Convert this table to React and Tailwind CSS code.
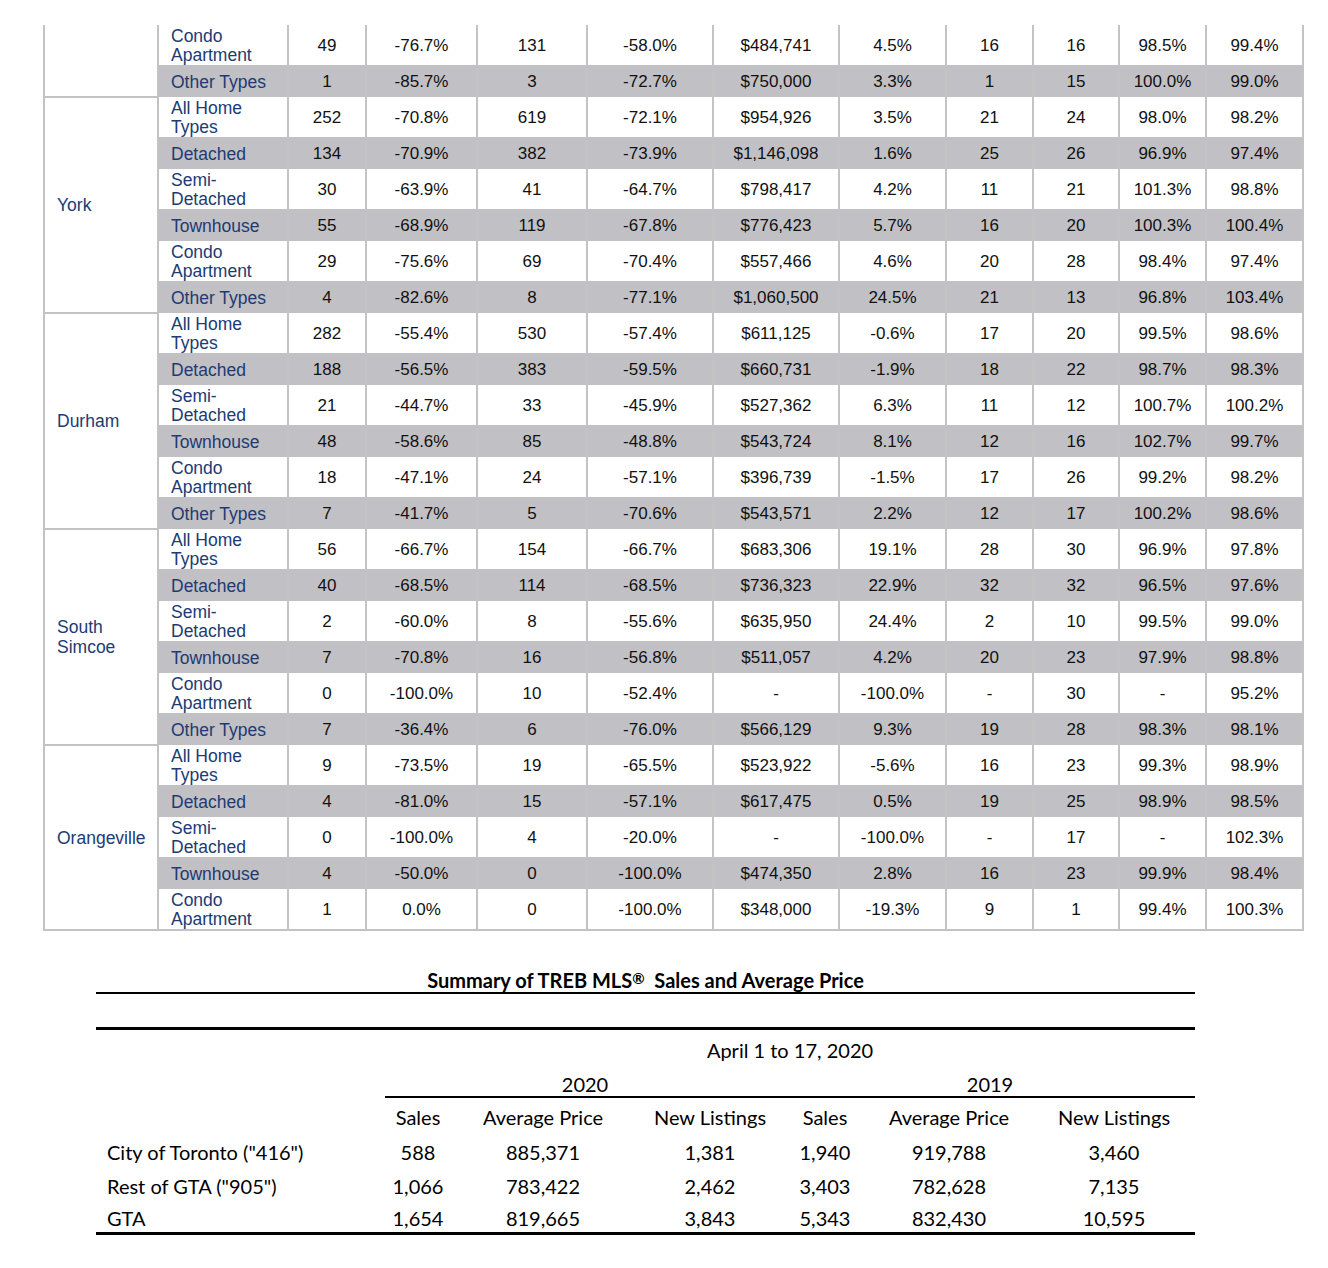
const COL_W = ['w-[114px]', 'w-[130px]', 'w-[78px]', 'w-[111px]', 'w-[110px]', 'w-[126px]', 'w-[126px]', 'w-[107px]', 'w-[87px]', 'w-[86px]', 'w-[87px]', 'w-[97px]']

const TYPES = {
  all: { label: ['All Home', 'Types'], gray: false },
  det: { label: ['Detached'], gray: true },
  semi: { label: ['Semi-', 'Detached'], gray: false },
  town: { label: ['Townhouse'], gray: true },
  condo: { label: ['Condo', 'Apartment'], gray: false },
  other: { label: ['Other Types'], gray: true },
}

const REGIONS = [
  {
    name: [],
    rows: [
      ['condo', '49', '-76.7%', '131', '-58.0%', '$484,741', '4.5%', '16', '16', '98.5%', '99.4%'],
      ['other', '1', '-85.7%', '3', '-72.7%', '$750,000', '3.3%', '1', '15', '100.0%', '99.0%'],
    ],
  },
  {
    name: ['York'],
    rows: [
      ['all', '252', '-70.8%', '619', '-72.1%', '$954,926', '3.5%', '21', '24', '98.0%', '98.2%'],
      ['det', '134', '-70.9%', '382', '-73.9%', '$1,146,098', '1.6%', '25', '26', '96.9%', '97.4%'],
      ['semi', '30', '-63.9%', '41', '-64.7%', '$798,417', '4.2%', '11', '21', '101.3%', '98.8%'],
      ['town', '55', '-68.9%', '119', '-67.8%', '$776,423', '5.7%', '16', '20', '100.3%', '100.4%'],
      ['condo', '29', '-75.6%', '69', '-70.4%', '$557,466', '4.6%', '20', '28', '98.4%', '97.4%'],
      ['other', '4', '-82.6%', '8', '-77.1%', '$1,060,500', '24.5%', '21', '13', '96.8%', '103.4%'],
    ],
  },
  {
    name: ['Durham'],
    rows: [
      ['all', '282', '-55.4%', '530', '-57.4%', '$611,125', '-0.6%', '17', '20', '99.5%', '98.6%'],
      ['det', '188', '-56.5%', '383', '-59.5%', '$660,731', '-1.9%', '18', '22', '98.7%', '98.3%'],
      ['semi', '21', '-44.7%', '33', '-45.9%', '$527,362', '6.3%', '11', '12', '100.7%', '100.2%'],
      ['town', '48', '-58.6%', '85', '-48.8%', '$543,724', '8.1%', '12', '16', '102.7%', '99.7%'],
      ['condo', '18', '-47.1%', '24', '-57.1%', '$396,739', '-1.5%', '17', '26', '99.2%', '98.2%'],
      ['other', '7', '-41.7%', '5', '-70.6%', '$543,571', '2.2%', '12', '17', '100.2%', '98.6%'],
    ],
  },
  {
    name: ['South', 'Simcoe'],
    rows: [
      ['all', '56', '-66.7%', '154', '-66.7%', '$683,306', '19.1%', '28', '30', '96.9%', '97.8%'],
      ['det', '40', '-68.5%', '114', '-68.5%', '$736,323', '22.9%', '32', '32', '96.5%', '97.6%'],
      ['semi', '2', '-60.0%', '8', '-55.6%', '$635,950', '24.4%', '2', '10', '99.5%', '99.0%'],
      ['town', '7', '-70.8%', '16', '-56.8%', '$511,057', '4.2%', '20', '23', '97.9%', '98.8%'],
      ['condo', '0', '-100.0%', '10', '-52.4%', '-', '-100.0%', '-', '30', '-', '95.2%'],
      ['other', '7', '-36.4%', '6', '-76.0%', '$566,129', '9.3%', '19', '28', '98.3%', '98.1%'],
    ],
  },
  {
    name: ['Orangeville'],
    rows: [
      ['all', '9', '-73.5%', '19', '-65.5%', '$523,922', '-5.6%', '16', '23', '99.3%', '98.9%'],
      ['det', '4', '-81.0%', '15', '-57.1%', '$617,475', '0.5%', '19', '25', '98.9%', '98.5%'],
      ['semi', '0', '-100.0%', '4', '-20.0%', '-', '-100.0%', '-', '17', '-', '102.3%'],
      ['town', '4', '-50.0%', '0', '-100.0%', '$474,350', '2.8%', '16', '23', '99.9%', '98.4%'],
      ['condo', '1', '0.0%', '0', '-100.0%', '$348,000', '-19.3%', '9', '1', '99.4%', '100.3%'],
    ],
  },
]

const SUMMARY = [
  ['City of Toronto ("416")', '588', '885,371', '1,381', '1,940', '919,788', '3,460'],
  ['Rest of GTA ("905")', '1,066', '783,422', '2,462', '3,403', '782,628', '7,135'],
  ['GTA', '1,654', '819,665', '3,843', '5,343', '832,430', '10,595'],
]

function Lines({ parts }) {
  return parts.map((p, i) => (
    <span key={i}>
      {i > 0 && <br />}
      {p}
    </span>
  ))
}

function MarketTable() {
  return (
    <table className="table-fixed border-collapse w-[1261px] ml-[43px] mt-[25px] font-[family-name:'Liberation_Sans',Arial,sans-serif] text-[17px] leading-5 text-[#111]">
      <colgroup>
        {COL_W.map((w, i) => (
          <col key={i} className={w} />
        ))}
      </colgroup>
      <tbody>
        {REGIONS.map((region, ri) =>
          region.rows.map((row, i) => {
            const type = TYPES[row[0]]
            const last = ri === REGIONS.length - 1 && i === region.rows.length - 1
            const two = type.label.length > 1
            return (
              <tr key={`${ri}-${i}`} className={`${two ? 'h-10' : 'h-8'} ${type.gray ? 'bg-[#c1c0c5]' : 'bg-white'}`}>
                {i === 0 && (
                  <td
                    rowSpan={region.rows.length}
                    className="bg-white border-2 border-t-0 border-[#c3c3c3] p-0 pl-3 align-middle text-[17.5px] text-[#203b73]"
                  >
                    <Lines parts={region.name} />
                  </td>
                )}
                <td
                  className={`border-x-2 border-[#c3c3c3] p-0 pl-3 pt-[2px] text-[17.5px] text-[#203b73] ${two ? 'leading-[19px]' : ''} ${last ? 'border-b-2' : ''}`}
                >
                  <Lines parts={type.label} />
                </td>
                {row.slice(1).map((v, ci) => (
                  <td key={ci} className={`border-x-2 border-[#c3c3c3] p-0 pt-[2px] text-center ${last ? 'border-b-2' : ''}`}>
                    {v}
                  </td>
                ))}
              </tr>
            )
          })
        )}
      </tbody>
    </table>
  )
}

function Summary() {
  const grid = 'grid grid-cols-[289px_66px_184px_150px_80px_168px_162px]'
  return (
    <div className="ml-[96px] w-[1099px] font-[family-name:Lato,'Open_Sans',sans-serif] text-[20px] text-black">
      <div className="mt-[35px] leading-6 text-center font-bold border-b-2 border-black">
        Summary of TREB MLS<span className="text-[15px] align-[4px]">®</span>&nbsp; Sales and Average Price
      </div>
      <div className="h-[36px] border-b-[3px] border-black" />

      <div className={grid}>
        <div />
        <div className="col-span-6 h-10 flex items-center justify-center">April 1 to 17, 2020</div>

        <div />
        <div className="col-span-3 h-7 flex items-end justify-center leading-6 border-b-2 border-black">2020</div>
        <div className="col-span-3 h-7 flex items-end justify-center leading-6 border-b-2 border-black">2019</div>

        <div className="h-[37px]" />
        {['Sales', 'Average Price', 'New Listings', 'Sales', 'Average Price', 'New Listings'].map((h, i) => (
          <div key={i} className="h-[37px] flex items-center justify-center">
            {h}
          </div>
        ))}

        {SUMMARY.map((row, ri) => {
          const last = ri === SUMMARY.length - 1
          const cls = last ? 'h-[32px] border-b-[3px] border-black' : 'h-[34px]'
          return row.map((v, ci) => (
            <div
              key={`${ri}-${ci}`}
              className={`${cls} flex items-center ${ci === 0 ? 'pl-[11px]' : 'justify-center'}`}
            >
              {v}
            </div>
          ))
        })}
      </div>
    </div>
  )
}

export default function App() {
  return (
    <div className="bg-white w-[1328px] min-h-[1268px] overflow-hidden">
      <MarketTable />
      <Summary />
    </div>
  )
}
